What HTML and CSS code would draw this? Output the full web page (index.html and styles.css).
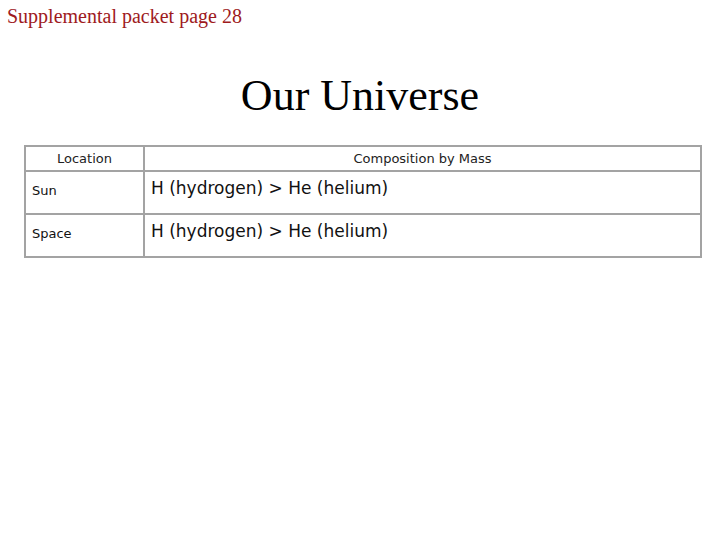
FILE: index.html
```html
<!DOCTYPE html>
<html>
<head>
<meta charset="utf-8">
<link rel="stylesheet" href="styles.css">
</head>
<body>
<div class="page">
  <div class="packet">Supplemental packet page 28</div>
  <h1 class="title">Our Universe</h1>
  <table class="comp">
    <tr class="head">
      <th class="loc">Location</th>
      <th class="mass">Composition by Mass</th>
    </tr>
    <tr class="row">
      <td class="name">Sun</td>
      <td class="val">H (hydrogen) &gt; He (helium)</td>
    </tr>
    <tr class="row">
      <td class="name">Space</td>
      <td class="val">H (hydrogen) &gt; He (helium)</td>
    </tr>
  </table>
</div>
</body>
</html>
```
FILE: styles.css
```css
html, body {
  margin: 0;
  padding: 0;
  background: #fff;
}
.page {
  width: 720px;
  height: 540px;
  position: relative;
}
.packet {
  font-family: "Liberation Serif", serif;
  font-size: 20px;
  line-height: 24px;
  color: #9e1a1d;
  padding: 4px 0 0 7px;
}
.title {
  font-family: "Liberation Serif", serif;
  font-weight: normal;
  font-size: 44px;
  line-height: 50px;
  color: #000;
  text-align: center;
  margin: 43px 0 0 0;
}
.comp {
  border-collapse: collapse;
  margin: 24px 0 0 24px;
  width: 678px;
  font-family: "DejaVu Sans", sans-serif;
  color: #111;
}
.comp th, .comp td {
  border: 2px solid #a3a3a3;
  padding: 0;
}
.head {
  height: 25px;
}
.head th {
  font-weight: normal;
  font-size: 13px;
  text-align: center;
  vertical-align: middle;
  color: #222;
}
.loc { width: 117px; }
.row {
  height: 43px;
}
.row td {
  vertical-align: top;
}
.row .name {
  font-size: 13px;
  padding: 11px 0 0 6px;
}
.row .val {
  font-size: 17px;
  padding: 6px 0 0 6px;
}
```
